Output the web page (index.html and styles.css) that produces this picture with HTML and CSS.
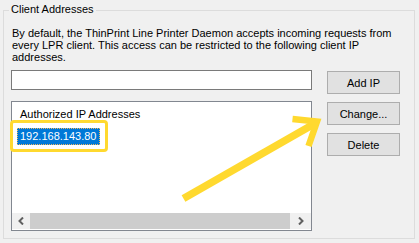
FILE: index.html
```html
<!DOCTYPE html>
<html lang="en">
<head>
<meta charset="utf-8">
<title>Client Addresses</title>
<link rel="stylesheet" href="styles.css">
</head>
<body>
<fieldset class="group">
  <legend class="group-title">Client Addresses</legend>
  <p class="intro">By default, the ThinPrint Line Printer Daemon accepts incoming requests from every LPR client. This access can be restricted to the following client IP addresses.</p>
  <div class="editor">
    <div class="left-col">
      <div class="ip-input"></div>
      <div class="list">
        <div class="list-body">
          <div class="list-header">Authorized IP Addresses</div>
          <div class="list-row"><span class="item-selected">192.168.143.80</span></div>
        </div>
        <div class="hscroll">
          <div class="scroll-btn">
            <svg width="6" height="8" viewBox="0 0 6 8"><polyline points="5,0.5 1.5,4 5,7.5" fill="none" stroke="#606060" stroke-width="2"/></svg>
          </div>
          <div class="scroll-thumb"></div>
          <div class="scroll-btn right">
            <svg width="6" height="8" viewBox="0 0 6 8"><polyline points="1,0.5 4.5,4 1,7.5" fill="none" stroke="#606060" stroke-width="2"/></svg>
          </div>
        </div>
      </div>
    </div>
    <div class="buttons">
      <button class="btn">Add IP</button>
      <button class="btn">Change...</button>
      <button class="btn">Delete</button>
    </div>
  </div>
</fieldset>
<svg class="annotation" width="419" height="243" viewBox="0 0 419 243">
  <rect x="11.5" y="121.5" width="95" height="29" rx="2.5" fill="none" stroke="#ffd92f" stroke-width="3"/>
  <line x1="183.5" y1="198.5" x2="314" y2="124" stroke="#ffd92f" stroke-width="7.5"/>
  <polyline points="292.5,119 317,121.5 308.5,146" fill="none" stroke="#ffd92f" stroke-width="6.5" stroke-linejoin="miter" stroke-miterlimit="10"/>
</svg>
</body>
</html>
```
FILE: styles.css
```css
html, body {
  margin: 0;
  padding: 0;
}
body {
  width: 419px;
  height: 243px;
  background: #f0f0f0;
  font-family: "Liberation Sans", Arial, sans-serif;
  font-size: 11px;
  color: #000;
  position: relative;
  overflow: hidden;
}
.group {
  margin: 3px 0 0 3px;
  width: 412px;
  box-sizing: border-box;
  border: 1px solid #dcdcdc;
  padding: 0 0 7px 7px;
}
.group-title {
  padding: 0 2px 2px;
  margin-left: -2px;
  line-height: 13px;
}
.intro {
  margin: 9px 0 0 1px;
  line-height: 12px;
  width: 396px;
}
.editor {
  margin-top: 7px;
  display: grid;
  grid-template-columns: 301px 73px;
  column-gap: 15px;
}
.left-col {
  display: flex;
  flex-direction: column;
  gap: 11px;
}
.ip-input {
  height: 20px;
  box-sizing: border-box;
  border: 1px solid #7a7a7a;
  background: #fff;
}
.list {
  height: 130px;
  box-sizing: border-box;
  border: 1px solid #828790;
  background: #fff;
  display: flex;
  flex-direction: column;
}
.list-body {
  flex: 1;
  padding: 6px 0 0 5px;
}
.list-header {
  line-height: 13px;
  padding-left: 3px;
}
.list-row {
  margin-top: 7px;
  display: flex;
}
.item-selected {
  background: #0078d7;
  color: #fff;
  line-height: 15px;
  padding: 0 3px 0 2px;
  border: 1px dotted #f2b960;
}
.hscroll {
  height: 16px;
  margin-bottom: 1px;
  display: flex;
  background: #f0f0f0;
}
.scroll-btn {
  width: 18px;
  display: flex;
  align-items: center;
  justify-content: center;
}
.scroll-btn.right {
  width: 21px;
}
.scroll-thumb {
  flex: 1;
  background: #cdcdcd;
}
.buttons {
  margin-top: 1px;
  display: flex;
  flex-direction: column;
  gap: 8px;
}
.btn {
  height: 23px;
  width: 73px;
  box-sizing: border-box;
  border: 1px solid #adadad;
  background: #e1e1e1;
  font-family: inherit;
  font-size: 11px;
  color: #000;
  padding: 0;
  margin: 0;
}
.annotation {
  position: absolute;
  left: 0;
  top: 0;
  pointer-events: none;
}
```
